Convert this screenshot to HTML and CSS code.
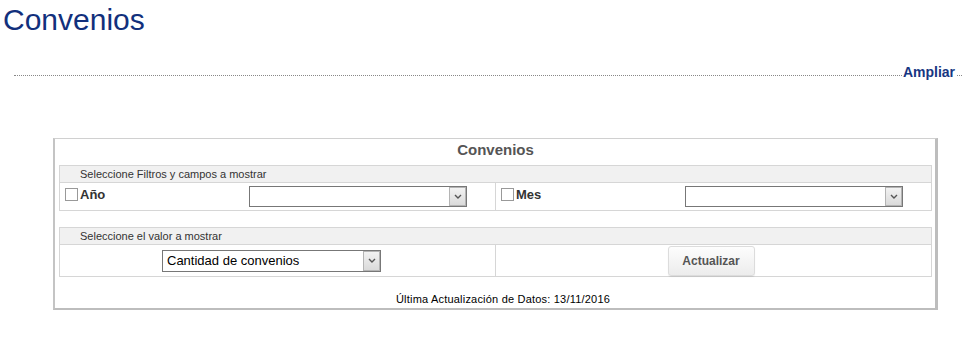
FILE: index.html
```html
<!DOCTYPE html>
<html lang="es">
<head>
    <meta charset="UTF-8">
    <meta name="viewport" content="width=device-width, initial-scale=1.0">
    <title>Convenios</title>
    <link rel="stylesheet" href="styles.css">
</head>
<body>
    <h1 class="page-title">Convenios</h1>
    <div class="toolbar">
        <a href="#" class="expand-link">Ampliar</a>
    </div>

    <div class="panel">
        <div class="panel-title">Convenios</div>

        <div class="box">
            <div class="box-header">Seleccione Filtros y campos a mostrar</div>
            <div class="box-row filter-row">
                <div class="cell filter-cell">
                    <label class="check-label"><input type="checkbox" class="check">Año</label>
                    <div class="combo">
                        <select class="combo-select"></select>
                        <span class="combo-arrow"><svg width="8" height="5" viewBox="0 0 8 5"><path d="M1 1 L4 4 L7 1" fill="none" stroke="#555" stroke-width="1.4"/></svg></span>
                    </div>
                </div>
                <div class="cell filter-cell">
                    <label class="check-label"><input type="checkbox" class="check">Mes</label>
                    <div class="combo">
                        <select class="combo-select"></select>
                        <span class="combo-arrow"><svg width="8" height="5" viewBox="0 0 8 5"><path d="M1 1 L4 4 L7 1" fill="none" stroke="#555" stroke-width="1.4"/></svg></span>
                    </div>
                </div>
            </div>
        </div>

        <div class="box box-value">
            <div class="box-header">Seleccione el valor a mostrar</div>
            <div class="box-row value-row">
                <div class="cell value-cell">
                    <div class="combo combo-value">
                        <select class="combo-select">
                            <option>Cantidad de convenios</option>
                        </select>
                        <span class="combo-arrow"><svg width="8" height="5" viewBox="0 0 8 5"><path d="M1 1 L4 4 L7 1" fill="none" stroke="#555" stroke-width="1.4"/></svg></span>
                    </div>
                </div>
                <div class="cell button-cell">
                    <button type="button" class="btn-update">Actualizar</button>
                </div>
            </div>
        </div>

        <div class="panel-footer">Última Actualización de Datos: 13/11/2016</div>
    </div>
</body>
</html>
```

FILE: styles.css
```css
body {
    margin: 0;
    font-family: "Liberation Sans", Arial, sans-serif;
    color: #333;
    background-color: #ffffff;
}
.page-title {
    margin: 3px 0 0 3px;
    font-size: 30px;
    font-weight: normal;
    line-height: 34px;
    color: #12307c;
}
.toolbar {
    display: flex;
    justify-content: flex-end;
    align-items: flex-end;
    height: 38px;
    margin: 0 7px 0 14px;
    border-bottom: 1px dotted #888;
}
.expand-link {
    margin: 0 6px -5px 0;
    padding: 0 1px;
    background-color: #ffffff;
    font-size: 14px;
    font-weight: bold;
    line-height: 16px;
    color: #173682;
    text-decoration: none;
}
.panel {
    box-sizing: border-box;
    width: 885px;
    margin: 62px 0 0 53px;
    padding: 0 3px 0 4px;
    border-top: 1px solid #d0d0d0;
    border-left: 2px solid #c4c4c4;
    border-right: 3px solid #bdbdbd;
    border-bottom: 2px solid #bdbdbd;
}
.panel-title {
    height: 26px;
    font-size: 15px;
    font-weight: bold;
    line-height: 22px;
    text-align: center;
    color: #555;
}
.box {
    border: 1px solid #d6d6d6;
}
.box-value {
    margin-top: 16px;
}
.box-header {
    height: 16px;
    padding-left: 20px;
    border-bottom: 1px solid #d6d6d6;
    background-color: #f1f1f1;
    font-size: 11px;
    line-height: 16px;
    color: #333;
}
.box-row {
    display: grid;
    grid-template-columns: 435px 435px;
}
.cell + .cell {
    border-left: 1px solid #d6d6d6;
}
.filter-row {
    height: 27px;
}
.filter-cell {
    display: grid;
    grid-template-columns: 185px 218px;
    align-items: center;
    padding-left: 4px;
}
.check-label {
    display: flex;
    align-items: center;
    padding-bottom: 5px;
    font-size: 13px;
    font-weight: bold;
    color: #333;
}
.check {
    appearance: none;
    width: 13px;
    height: 13px;
    margin: 0 2px 0 1px;
    border: 1px solid #999;
    background-color: #fff;
}
.combo {
    position: relative;
    width: 218px;
    height: 21px;
}
.combo-select {
    appearance: none;
    box-sizing: border-box;
    width: 100%;
    height: 100%;
    margin: 0;
    padding: 0 20px 0 4px;
    border: 1px solid #777;
    border-radius: 0;
    background-color: #fff;
    font-family: "Liberation Sans", Arial, sans-serif;
    font-size: 13px;
    color: #000;
}
.combo-arrow {
    position: absolute;
    top: 1px;
    right: 1px;
    bottom: 1px;
    box-sizing: border-box;
    width: 17px;
    display: flex;
    align-items: center;
    justify-content: center;
    border: 1px solid #b4b4b4;
    background: linear-gradient(#f2f2f2, #dadada);
    pointer-events: none;
}
.value-row {
    height: 31px;
}
.value-cell {
    display: flex;
    align-items: center;
    padding-left: 102px;
}
.combo-value {
    width: 219px;
    height: 22px;
}
.button-cell {
    display: flex;
    align-items: center;
    justify-content: center;
    padding-right: 4px;
}
.btn-update {
    width: 87px;
    height: 30px;
    border: 1px solid #dcdcdc;
    border-radius: 3px;
    background: linear-gradient(#fdfdfd, #ececec);
    box-shadow: 0 1px 1px rgba(0, 0, 0, 0.08);
    font-family: "Liberation Sans", Arial, sans-serif;
    font-size: 12px;
    font-weight: bold;
    color: #555;
    cursor: pointer;
}
.panel-footer {
    padding: 16px 0 2px 15px;
    font-size: 11px;
    line-height: 13px;
    letter-spacing: 0.2px;
    text-align: center;
    color: #000;
}
```
